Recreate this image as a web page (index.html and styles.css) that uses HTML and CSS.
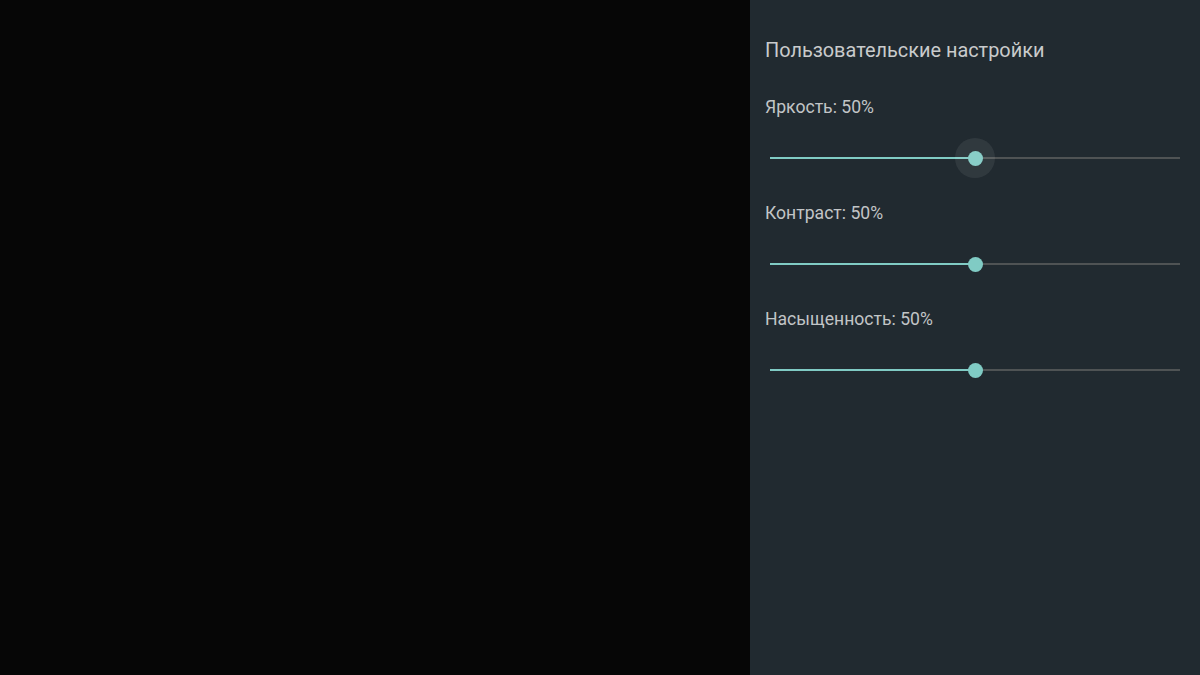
FILE: index.html
```html
<!DOCTYPE html>
<html lang="ru">
<head>
<meta charset="utf-8">
<link rel="stylesheet" href="styles.css">
</head>
<body>
<div class="screen">
  <div class="video"></div>
  <aside class="panel">
    <h1 class="title">Пользовательские настройки</h1>
    <div class="setting">
      <div class="label">Яркость: 50%</div>
      <div class="slider focused">
        <div class="track">
          <div class="active" style="width:50%"></div>
          <div class="thumb" style="left:50%"></div>
        </div>
      </div>
    </div>
    <div class="setting">
      <div class="label">Контраст: 50%</div>
      <div class="slider">
        <div class="track">
          <div class="active" style="width:50%"></div>
          <div class="thumb" style="left:50%"></div>
        </div>
      </div>
    </div>
    <div class="setting">
      <div class="label">Насыщенность: 50%</div>
      <div class="slider">
        <div class="track">
          <div class="active" style="width:50%"></div>
          <div class="thumb" style="left:50%"></div>
        </div>
      </div>
    </div>
  </aside>
</div>
</body>
</html>
```
FILE: styles.css
```css
* { box-sizing: border-box; }
html, body { margin: 0; padding: 0; }
body {
  width: 1200px;
  height: 675px;
  overflow: hidden;
  font-family: Roboto, "Noto Sans", sans-serif;
  background: #060606;
}
.screen {
  display: flex;
  width: 1200px;
  height: 675px;
}
.video {
  width: 750px;
  height: 100%;
  background: #060606;
}
.panel {
  width: 450px;
  height: 100%;
  background: #212a30;
  padding: 39px 15px 0 15px;
  display: flex;
  flex-direction: column;
}
.title {
  margin: 0 0 34px 0;
  font-size: 19.9px;
  line-height: 24px;
  font-weight: 400;
  color: #c9cbcc;
}
.setting {
  display: flex;
  flex-direction: column;
}
.label {
  font-size: 17.6px;
  line-height: 20px;
  color: #c2c5c7;
}
.slider {
  height: 42px;
  margin: 20px 0 24px 0;
  padding: 0 5px 0 5px;
  width: 420px;
  display: flex;
  align-items: center;
}
.track {
  position: relative;
  width: 100%;
  height: 2px;
  background: #4f5354;
}
.active {
  position: absolute;
  left: 0;
  top: 0;
  height: 100%;
  background: #80cbc4;
}
.thumb {
  position: absolute;
  top: 50%;
  width: 15px;
  height: 15px;
  margin: -7.5px 0 0 -7.5px;
  border-radius: 50%;
  background: #80cbc4;
}
.focused .thumb::before {
  content: "";
  position: absolute;
  left: 50%;
  top: 50%;
  width: 40px;
  height: 40px;
  margin: -20px 0 0 -20px;
  border-radius: 50%;
  background: rgba(255, 255, 255, 0.07);
}
```
